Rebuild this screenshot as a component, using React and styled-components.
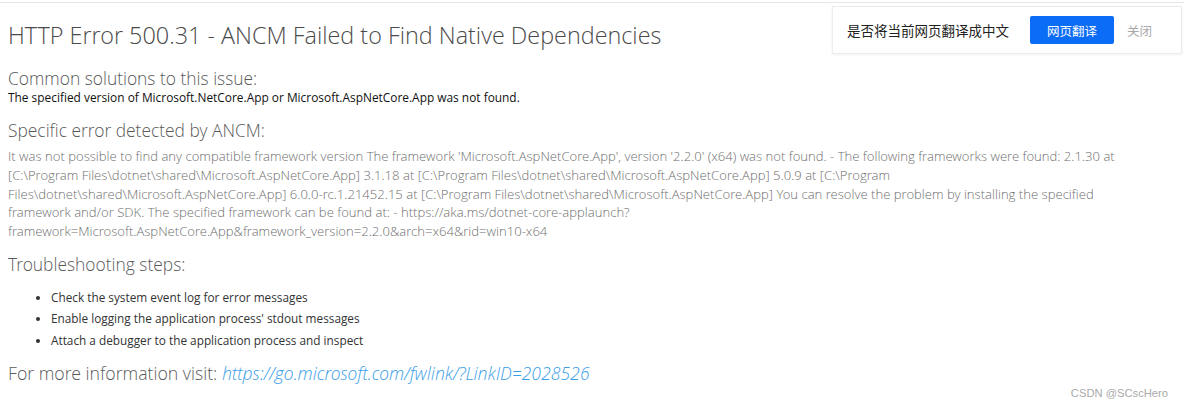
import React from "react";
import styled, { createGlobalStyle } from "styled-components";

const Global = createGlobalStyle`
  html, body { margin: 0; padding: 0; background: #fff; }
  body { font-family: "Open Sans", "Noto Sans", sans-serif; width: 1184px; height: 404px; overflow: hidden; }
`;

const light = `"Open Sans Light", "Open Sans", "Noto Sans", sans-serif`;

const Page = styled.div`
  position: relative;
  width: 1184px;
  height: 404px;
  box-sizing: border-box;
  border-top: 1px solid #e6e6e6;
  margin-top: 2px;
  padding: 16px 8px 0 8px;
  color: #555;
`;

const Title = styled.h1`
  margin: 0;
  font-family: ${light};
  font-size: 23.4px;
  font-weight: 300;
  color: #4a4a4a;
  line-height: 33px;
`;

const Heading = styled.h2`
  margin: ${(p) => p.$top || 0}px 0 0 0;
  font-family: ${light};
  font-size: 17.4px;
  font-weight: 300;
  color: #5a5a5a;
  line-height: 24px;
`;

const Lead = styled.p`
  margin: 0;
  font-size: 11.9px;
  color: #111;
  line-height: 15px;
`;

const Detail = styled.p`
  margin: 5px 0 0 0;
  font-family: ${light};
  font-size: 13.1px;
  font-weight: 300;
  color: #6e6e6e;
  line-height: 18.8px;
  max-width: 1115px;
`;

const Steps = styled.ul`
  margin: 11px 0 0 0;
  padding: 0 0 0 43px;
  list-style: disc;
`;

const Step = styled.li`
  font-size: 11.8px;
  color: #333;
  line-height: 21.5px;
`;

const Info = styled.p`
  margin: 9px 0 0 0;
  font-family: ${light};
  font-size: 17.7px;
  font-weight: 300;
  color: #5a5a5a;
  line-height: 26px;
`;

const Link = styled.a`
  color: #3a9ee6;
  font-style: italic;
  text-decoration: none;
`;

const Banner = styled.div`
  position: absolute;
  top: 3px;
  right: 2px;
  width: 350px;
  height: 48px;
  box-sizing: border-box;
  border: 1px solid #ececec;
  box-shadow: 0 1px 3px rgba(0, 0, 0, 0.06);
  background: #fff;
  display: flex;
  align-items: center;
  padding: 0 14px;
  font-family: "Noto Sans CJK SC", sans-serif;
`;

const BannerText = styled.span`
  font-size: 13.5px;
  color: #222;
  flex: 1;
`;

const TranslateBtn = styled.button`
  width: 84px;
  height: 28px;
  border: none;
  border-radius: 2px;
  background: #0b6cf5;
  color: #fff;
  font-family: inherit;
  font-size: 12.5px;
  margin-right: 13px;
`;

const CloseBtn = styled.span`
  font-size: 12.5px;
  color: #a8a8a8;
  margin-right: 15px;
`;

const Watermark = styled.div`
  position: absolute;
  right: 16px;
  bottom: 7px;
  font-family: "Liberation Sans", sans-serif;
  font-size: 11.2px;
  color: #aaa;
`;

export default function App() {
  return (
    <>
      <Global />
      <Page>
        <Title>HTTP Error 500.31 - ANCM Failed to Find Native Dependencies</Title>
        <Heading $top={14}>Common solutions to this issue:</Heading>
        <Lead>The specified version of Microsoft.NetCore.App or Microsoft.AspNetCore.App was not found.</Lead>
        <Heading $top={13}>Specific error detected by ANCM:</Heading>
        <Detail>
          It was not possible to find any compatible framework version The framework 'Microsoft.AspNetCore.App', version '2.2.0' (x64) was not found. - The following frameworks were found: 2.1.30 at [C:\Program Files\dotnet\shared\Microsoft.AspNetCore.App] 3.1.18 at [C:\Program Files\dotnet\shared\Microsoft.AspNetCore.App] 5.0.9 at [C:\Program Files\dotnet\shared\Microsoft.AspNetCore.App] 6.0.0-rc.1.21452.15 at [C:\Program Files\dotnet\shared\Microsoft.AspNetCore.App] You can resolve the problem by installing the specified framework and/or SDK. The specified framework can be found at: - https://aka.ms/dotnet-core-applaunch?framework=Microsoft.AspNetCore.App&amp;framework_version=2.2.0&amp;arch=x64&amp;rid=win10-x64
        </Detail>
        <Heading $top={11}>Troubleshooting steps:</Heading>
        <Steps>
          <Step>Check the system event log for error messages</Step>
          <Step>Enable logging the application process' stdout messages</Step>
          <Step>Attach a debugger to the application process and inspect</Step>
        </Steps>
        <Info>
          For more information visit: <Link href="#">https://go.microsoft.com/fwlink/?LinkID=2028526</Link>
        </Info>
        <Banner>
          <BannerText>是否将当前网页翻译成中文</BannerText>
          <TranslateBtn>网页翻译</TranslateBtn>
          <CloseBtn>关闭</CloseBtn>
        </Banner>
        <Watermark>CSDN @SCscHero</Watermark>
      </Page>
    </>
  );
}
